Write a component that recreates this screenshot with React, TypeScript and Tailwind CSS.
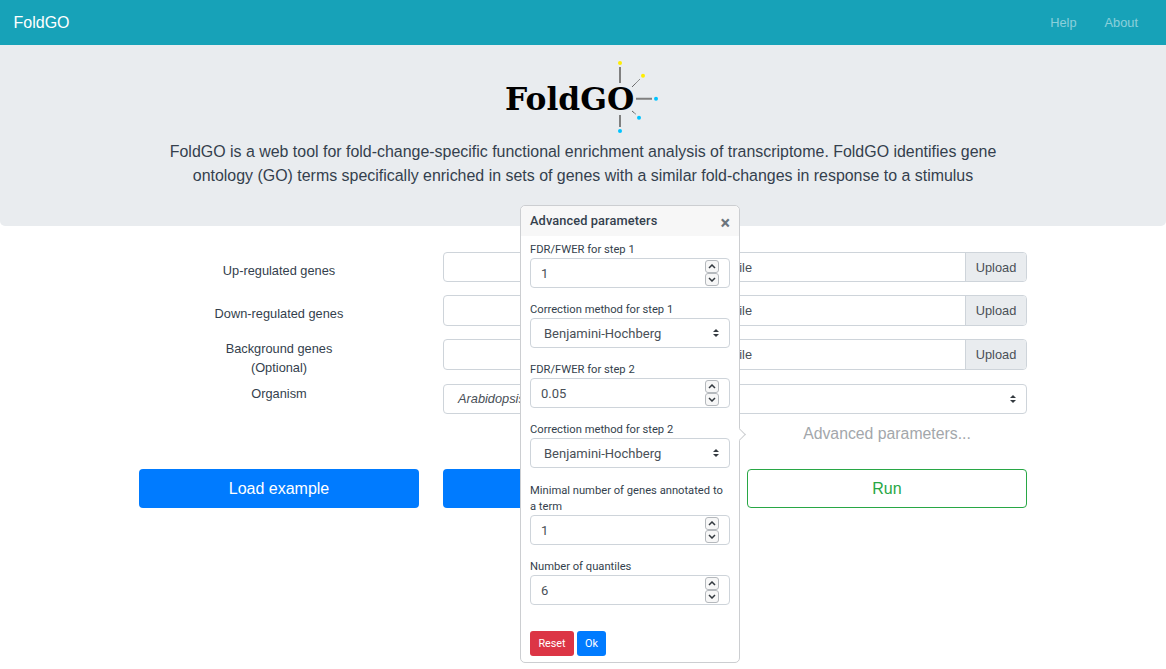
import React from 'react';

const sans = 'font-["Liberation_Sans",Arial,sans-serif]';

const SelectArrows = () => (
    <svg width="8" height="10" viewBox="0 0 8 10" className="shrink-0">
        <path d="M4 1 L7 4 L1 4 Z" fill="#343a40" />
        <path d="M4 9 L7 6 L1 6 Z" fill="#343a40" />
    </svg>
);

const Chevron = ({ up }: { up?: boolean }) => (
    <svg width="8" height="5" viewBox="0 0 8 5">
        <path d={up ? 'M1 4 L4 1 L7 4' : 'M1 1 L4 4 L7 1'} fill="none" stroke="#343a40" strokeWidth="1.5" />
    </svg>
);

const NumberField = ({ label, value, wrapped }: { label: string; value: string; wrapped?: boolean }) => (
    <div className={`mb-[14px] ${wrapped ? 'pt-[1px]' : ''}`}>
        <div className="text-[11.2px] leading-[16px] text-[#343f4d]">{label}</div>
        <div className="h-[30px] border border-[#ced4da] rounded-[4px] bg-white flex items-center justify-between pl-[10px] pr-[10px]">
            <span className="text-[13px] pt-[2px] text-[#495057]">{value}</span>
            <div className="flex flex-col">
                <div className="w-[14px] h-[13px] border border-[#b5b9bd] rounded-[3px] flex items-center justify-center bg-[#f7f7f7]"><Chevron up /></div>
                <div className="w-[14px] h-[13px] border border-[#b5b9bd] rounded-[3px] flex items-center justify-center bg-[#f7f7f7]"><Chevron /></div>
            </div>
        </div>
    </div>
);

const SelectField = ({ label, value }: { label: string; value: string }) => (
    <div className="mb-[14px]">
        <div className="text-[11.2px] leading-[16px] text-[#343f4d]">{label}</div>
        <div className="h-[30px] border border-[#ced4da] rounded-[4px] bg-white flex items-center justify-between pl-[13px] pr-[9px]">
            <span className="text-[13px] pt-[2px] text-[#495057]">{value}</span>
            <SelectArrows />
        </div>
    </div>
);

const FileRow = ({ label, optional, gapClass }: { label: string; optional?: boolean; gapClass: string }) => (
    <div className={`flex gap-[24px] ${gapClass}`}>
        <div className={`w-[280px] text-center text-[12.8px] leading-[19px] text-[#343f4d] ${optional ? '' : 'pt-[9px]'}`}>
            {label}
            {optional && <div>(Optional)</div>}
        </div>
        <div className="w-[584px] h-[30.4px] flex border border-[#ced4da] rounded-[4px] bg-white overflow-hidden">
            <div className="flex-1 pl-[244px] text-[12.8px] leading-[29px] text-[#495057]">Choose file</div>
            <div className="w-[61px] bg-[#e9ecef] border-l border-[#ced4da] text-center text-[12.8px] leading-[29px] text-[#495057]">Upload</div>
        </div>
    </div>
);

export default function App() {
    return (
        <div className={`${sans} relative min-h-[669px] bg-white overflow-hidden`}>
            <nav className="h-[45px] bg-[#17a2b8] flex items-center justify-between pl-[13.5px] pr-[28px]">
                <span className="text-[16px] text-white">FoldGO</span>
                <div className="flex gap-[28px] text-[12.8px] text-white/50">
                    <span>Help</span>
                    <span>About</span>
                </div>
            </nav>

            <header className="h-[181px] bg-[#e9ecef] rounded-b-[5px] flex flex-col items-center pt-[13px]">
                <svg width="156" height="78" viewBox="0 0 156 78">
                    <text x="0" y="52" fontFamily="'DejaVu Serif', serif" fontWeight="700" fontSize="31.3" fill="#000">FoldGO</text>
                    <path d="M115 9 V25 M131 40.7 H147 M115 57 V69" stroke="#808080" strokeWidth="2" fill="none" />
                    <path d="M127 29 L135 21 M127 53 L131 56.3" stroke="#333" strokeWidth="1" strokeDasharray="1 0.6" fill="none" />
                    <circle cx="115" cy="5" r="2" fill="#ffee00" />
                    <circle cx="138" cy="17.7" r="2" fill="#ffee00" />
                    <circle cx="151" cy="40.7" r="2" fill="#00c3ff" />
                    <circle cx="134" cy="59.7" r="2" fill="#00c3ff" />
                    <circle cx="115" cy="73" r="2" fill="#00c3ff" />
                </svg>
                <p className="mt-[4px] w-[850px] text-center text-[15.94px] leading-[24px] text-[#343f4d]">
                    FoldGO is a web tool for fold-change-specific functional enrichment analysis of transcriptome. FoldGO identifies gene ontology (GO) terms specifically enriched in sets of genes with a similar fold-changes in response to a stimulus
                </p>
            </header>

            <main className="w-[888px] ml-[139px] pt-[26px]">
                <FileRow label="Up-regulated genes" gapClass="mb-[13px]" />
                <FileRow label="Down-regulated genes" gapClass="mb-[13.6px]" />
                <FileRow label="Background genes" optional gapClass="mb-[6.3px]" />
                <div className="flex gap-[24px]">
                    <div className="w-[280px] text-center text-[12.8px] leading-[19px] text-[#343f4d]">Organism</div>
                    <div className="w-[584px] h-[30.4px] border border-[#ced4da] rounded-[4px] bg-white flex items-center justify-between pl-[14px] pr-[9px]">
                        <span className="text-[12.8px] italic text-[#495057]">Arabidopsis thaliana</span>
                        <SelectArrows />
                    </div>
                </div>
                <div className="flex justify-end mt-[8px]">
                    <div className="w-[280px] text-center text-[15.8px] leading-[24px] text-[#a3a7ab]">Advanced parameters...</div>
                </div>
                <div className="flex gap-[24px] mt-[23px]">
                    <button className="w-[280px] h-[39px] pt-[1px] rounded-[4px] bg-[#007bff] text-white text-[16px]">Load example</button>
                    <button className="w-[280px] h-[39px] rounded-[4px] bg-[#007bff]" aria-label="Clear" />
                    <button className="w-[280px] h-[39px] pt-[1px] rounded-[4px] border border-[#28a745] bg-white text-[#28a745] text-[16px]">Run</button>
                </div>
            </main>

            {/* Popover */}
            <div className="absolute left-[520px] top-[205px] w-[220px] h-[458px] bg-white border border-[#ccced1] rounded-[5px] font-['Roboto',sans-serif]">
                <div className="absolute right-[-5px] top-[224px] w-[9px] h-[9px] rotate-45 bg-white border-t border-r border-[#ccced1]" />
                <div className="h-[30px] bg-[#f7f7f7] rounded-t-[5px] flex items-center justify-between pl-[9px] pr-[9px] relative">
                    <span className="text-[12.8px] font-medium text-[#343f4d] tracking-[0.1px]">Advanced parameters</span>
                    <span className="text-[18px] font-bold leading-none text-[#6c757d] mt-[3px]">×</span>
                </div>
                <div className="pt-[6px] px-[9px] relative">
                    <NumberField label="FDR/FWER for step 1" value="1" />
                    <SelectField label="Correction method for step 1" value="Benjamini-Hochberg" />
                    <NumberField label="FDR/FWER for step 2" value="0.05" />
                    <SelectField label="Correction method for step 2" value="Benjamini-Hochberg" />
                    <NumberField label="Minimal number of genes annotated to a term" value="1" wrapped />
                    <NumberField label="Number of quantiles" value="6" />
                    <div className="flex gap-[3px] mt-[26px]">
                        <button className="w-[44px] h-[25px] pt-[1px] bg-[#dc3545] rounded-[3px] text-white text-[10.8px]">Reset</button>
                        <button className="w-[29px] h-[25px] pt-[1px] bg-[#007bff] rounded-[3px] text-white text-[10.8px]">Ok</button>
                    </div>
                </div>
            </div>
        </div>
    );
}
